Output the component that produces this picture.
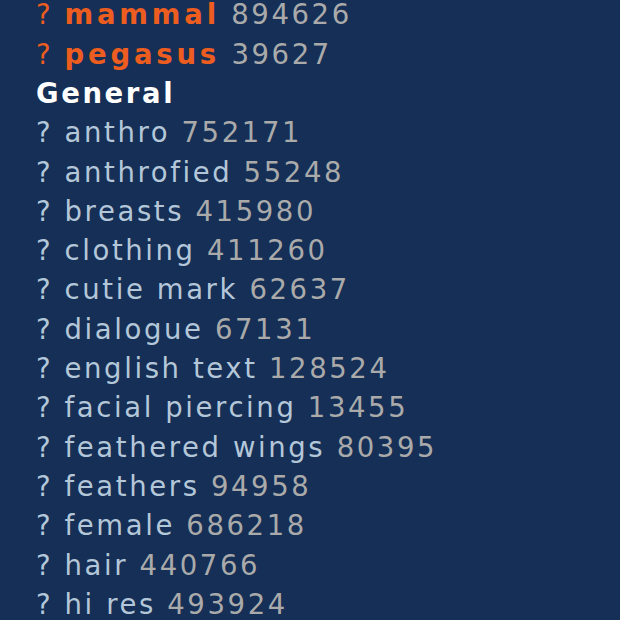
const species = [
  { name: "mammal", count: 894626 },
  { name: "pegasus", count: 39627 },
]

const general = [
  { name: "anthro", count: 752171 },
  { name: "anthrofied", count: 55248 },
  { name: "breasts", count: 415980 },
  { name: "clothing", count: 411260 },
  { name: "cutie mark", count: 62637 },
  { name: "dialogue", count: 67131 },
  { name: "english text", count: 128524 },
  { name: "facial piercing", count: 13455 },
  { name: "feathered wings", count: 80395 },
  { name: "feathers", count: 94958 },
  { name: "female", count: 686218 },
  { name: "hair", count: 440766 },
  { name: "hi res", count: 493924 },
]

export default function App() {
  return (
    <div className="w-[620px] h-[620px] overflow-hidden bg-[#152f56] font-['DejaVu_Sans',Verdana,sans-serif] text-[27.5px] leading-[39.3px] tracking-[2.6px]">
      <ul className="-mt-[4.6px] pl-[36px]">
        {species.map((t) => (
          <li key={t.name} className="whitespace-nowrap">
            <a className="text-[#ed5d1f]">?</a>{" "}
            <a className="font-bold tracking-[3.8px] text-[#ed5d1f]">{t.name}</a>{" "}
            <span className="text-[#aaaaaa]">{t.count}</span>
          </li>
        ))}
        <li className="font-bold text-white">General</li>
        {general.map((t) => (
          <li key={t.name} className="whitespace-nowrap">
            <a className="text-[#b4c7d9]">?</a>{" "}
            <a className="text-[#b4c7d9]">{t.name}</a>{" "}
            <span className="text-[#aaaaaa]">{t.count}</span>
          </li>
        ))}
      </ul>
    </div>
  )
}
